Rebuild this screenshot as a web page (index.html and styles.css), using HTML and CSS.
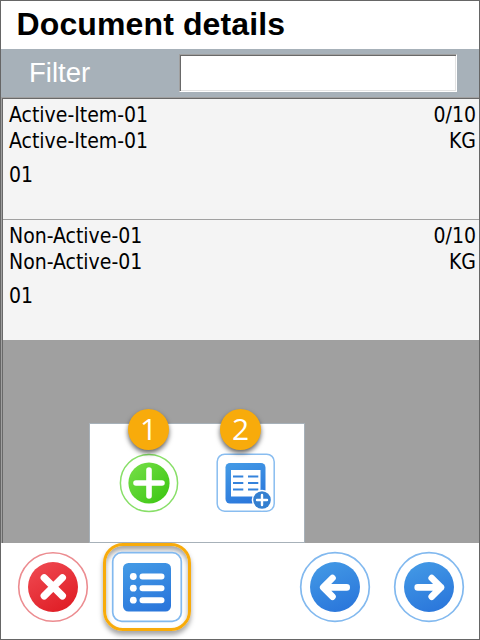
FILE: index.html
```html
<!DOCTYPE html>
<html lang="en">
<head>
<meta charset="utf-8">
<title>Document details</title>
<link rel="stylesheet" href="styles.css">
</head>
<body>
<div class="window">
  <h1 class="title">Document details</h1>
  <div class="filter">
    <label class="filter-label" for="filter">Filter</label>
    <input class="filter-input" id="filter" type="text">
  </div>
  <div class="list">
    <div class="row">
      <div class="line"><span>Active-Item-01</span><span>0/10</span></div>
      <div class="line"><span>Active-Item-01</span><span>KG</span></div>
      <div class="line extra"><span>01</span></div>
    </div>
    <div class="row">
      <div class="line"><span>Non-Active-01</span><span>0/10</span></div>
      <div class="line"><span>Non-Active-01</span><span>KG</span></div>
      <div class="line extra"><span>01</span></div>
    </div>
    <div class="popup">
      <div class="action">
        <span class="badge">1</span>
        <svg width="60" height="60" viewBox="0 0 60 60">
          <defs><linearGradient id="green" x1="0" y1="0" x2="1" y2="1"><stop offset="0" stop-color="#78e04a"/><stop offset="1" stop-color="#38c50e"/></linearGradient></defs>
          <circle cx="30" cy="30" r="28.6" fill="#fff" stroke="#88df68" stroke-width="1.5"/>
          <circle cx="30" cy="30" r="20.6" fill="url(#green)"/>
          <path d="M30 17v26M17 30h26" stroke="#fff" stroke-width="5.6" stroke-linecap="round"/>
        </svg>
      </div>
      <div class="action">
        <span class="badge second">2</span>
        <svg width="60" height="60" viewBox="0 0 60 60">
          <defs><linearGradient id="blue" x1="0.3" y1="0" x2="0.7" y2="1"><stop offset="0" stop-color="#4298e5"/><stop offset="1" stop-color="#2a76db"/></linearGradient></defs>
          <rect x="1.2" y="1.2" width="57" height="57" rx="7.5" fill="#fff" stroke="#89bdf0" stroke-width="1.5"/>
          <rect x="9.5" y="10" width="40" height="40.5" rx="4.5" fill="url(#blue)"/>
          <rect x="15" y="17" width="29.5" height="26.5" fill="#fff"/>
          <path d="M17 23.5h10.3M32 23.5h10.3M17 30h10.3M32 30h10.3M17 36.5h10.3M32 36.5h10.3" stroke="#3583dc" stroke-width="2"/>
          <circle cx="46" cy="47" r="10.3" fill="#fff"/>
          <circle cx="46" cy="47" r="8.8" fill="#347fd0"/>
          <path d="M46 42v10M41 47h10" stroke="#fff" stroke-width="2.4" stroke-linecap="round"/>
        </svg>
      </div>
    </div>
  </div>
  <div class="footer">
    <svg class="cancel" width="72" height="72" viewBox="0 0 72 72">
      <defs><linearGradient id="red" x1="0.2" y1="0" x2="0.8" y2="1"><stop offset="0" stop-color="#ef4850"/><stop offset="1" stop-color="#df1c24"/></linearGradient></defs>
      <circle cx="36" cy="36" r="34.3" fill="#fff" stroke="#ec8c90" stroke-width="1.6"/>
      <circle cx="36" cy="36" r="25" fill="url(#red)"/>
      <path d="M27.2 26.7l18.2 18.2M45.4 26.7L27.2 44.9" stroke="#fff" stroke-width="7.2" stroke-linecap="round"/>
    </svg>
    <div class="menu">
      <svg width="72" height="72" viewBox="0 0 72 72">
        <rect x="1.7" y="1.7" width="68.6" height="68.6" rx="9" fill="#fff" stroke="#82b9ef" stroke-width="1.7"/>
        <rect x="12" y="12" width="48" height="48.5" rx="5.5" fill="url(#blue)"/>
        <path d="M31.5 25.5h19M31.5 37.2h19M31.5 49.2h19" stroke="#fff" stroke-width="6" stroke-linecap="round"/>
        <g fill="#fff"><circle cx="22.3" cy="25.5" r="3.4"/><circle cx="22.3" cy="37.2" r="3.4"/><circle cx="22.3" cy="49.2" r="3.4"/></g>
      </svg>
    </div>
    <svg class="back" width="72" height="72" viewBox="0 0 72 72">
      <circle cx="36" cy="36" r="34.3" fill="#fff" stroke="#82b9ef" stroke-width="1.7"/>
      <circle cx="36" cy="36" r="25" fill="url(#blue)"/>
      <path d="M47.7 36.4H24.5M33.5 27L24.2 36.4l9.3 9.3" fill="none" stroke="#fff" stroke-width="6.6" stroke-linecap="round" stroke-linejoin="round"/>
    </svg>
    <svg class="next" width="72" height="72" viewBox="0 0 72 72">
      <circle cx="36" cy="36" r="34.3" fill="#fff" stroke="#82b9ef" stroke-width="1.7"/>
      <circle cx="36" cy="36" r="25" fill="url(#blue)"/>
      <path d="M24.7 36.4h23.2M38.7 27l9.3 9.4-9.3 9.3" fill="none" stroke="#fff" stroke-width="6.6" stroke-linecap="round" stroke-linejoin="round"/>
    </svg>
  </div>
</div>
</body>
</html>
```
FILE: styles.css
```css
* { box-sizing: border-box; }
body { margin: 0; font-family: "Liberation Sans", Arial, sans-serif; }
svg { display: block; flex: none; }
.window {
  width: 480px;
  height: 640px;
  border: 1px solid #666;
  background: #fff;
  display: flex;
  flex-direction: column;
}
.title {
  margin: 0;
  height: 48px;
  padding-left: 15.5px;
  font-size: 32px;
  line-height: 46px;
  letter-spacing: .12px;
  font-weight: bold;
  color: #000;
  white-space: nowrap;
}
.filter {
  height: 48px;
  background: #a7b1b9;
  display: flex;
  align-items: center;
  justify-content: space-between;
  padding: 0 22px 0 28px;
}
.filter-label { font-size: 27.5px; line-height: 46px; color: #fff; }
.filter-input {
  width: 278px;
  height: 38px;
  padding: 0 6px;
  background: #fff;
  border: 1px solid;
  border-color: #a0a0a0 #fff #fff #a0a0a0;
  box-shadow: inset 1px 1px #696969, inset -1px -1px #e3e3e3;
  font-size: 24px;
  outline: none;
}
.list {
  position: relative;
  height: 446px;
  border-left: 1px solid #a0a0a0;
  border-top: 1px solid #a0a0a0;
  box-shadow: inset 1px 1px #696969;
  padding: 1px 0 0 1px;
  background: #a0a0a0;
}
.row {
  height: 121px;
  background: #f4f4f4;
  border-bottom: 1px solid #a0a0a0;
  padding: 3px 3px 0 6px;
  font-family: "DejaVu Sans Condensed", "DejaVu Sans", sans-serif;
  font-stretch: condensed;
  font-size: 21px;
  color: #000;
}
.line { display: flex; justify-content: space-between; height: 26px; line-height: 26px; white-space: nowrap; }
.extra { margin-top: 8px; }
.popup {
  position: absolute;
  left: 87px;
  bottom: 0;
  width: 216px;
  height: 120px;
  background: #fff;
  border: 1px solid #a7b1b9;
  display: flex;
  gap: 37px;
  padding: 29px 0 0 29px;
}
.action { position: relative; width: 60px; height: 60px; }
.badge {
  position: absolute;
  left: 9px;
  top: -44px;
  width: 41px;
  height: 41px;
  border-radius: 50%;
  background: #f8ab0b;
  box-shadow: 0 3px 5px rgba(0, 0, 0, .6);
  color: #fff;
  font-family: "Open Sans", sans-serif;
  font-size: 30px;
  line-height: 40px;
  text-align: center;
}
.second { left: 4px; }
.footer { flex: 1; display: flex; align-items: flex-start; padding: 8px 14px 0 16px; }
.menu {
  width: 88px;
  height: 88px;
  margin: -8px 0 0 14px;
  padding: 5px;
  border: 3px solid #f8ab0b;
  border-radius: 20px;
  box-shadow: 0 4px 5px rgba(0, 0, 0, .35), inset 0 4px 5px rgba(0, 0, 0, .35);
  position: relative;
}
.back { margin-left: auto; }
.next { margin-left: 22px; }
```
